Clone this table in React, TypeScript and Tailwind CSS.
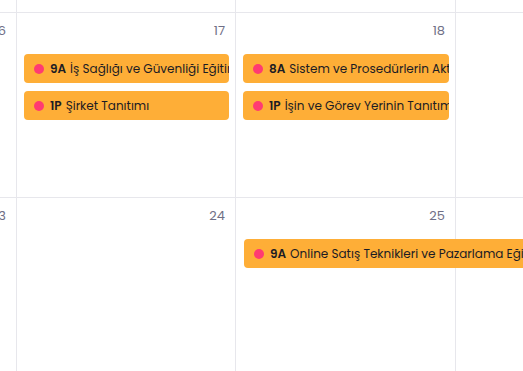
const events1 = [
  { col: 'col-start-2', code: '9A', title: 'İş Sağlığı ve Güvenliği Eğitimi', row: 'row-start-2' },
  { col: 'col-start-2', code: '1P', title: 'Şirket Tanıtımı', row: 'row-start-3' },
  { col: 'col-start-3', code: '8A', title: 'Sistem ve Prosedürlerin Aktarılması', row: 'row-start-2' },
  { col: 'col-start-3', code: '1P', title: 'İşin ve Görev Yerinin Tanıtımı', row: 'row-start-3' },
];

function EventChip({ code, title, className }: { code: string; title: string; className: string }) {
  return (
    <div className={`flex h-[29px] items-center overflow-hidden whitespace-nowrap rounded-[4px] bg-[#feae37] pl-[10px] text-[12px] text-[#1c1c24] ${className}`}>
      <span className="mr-[6px] h-[10px] w-[10px] shrink-0 rounded-full bg-[#ff3b72]" />
      <span className="font-semibold">{code}</span>
      <span className="ml-[4px]">{title}</span>
    </div>
  );
}

function DayCells({ days }: { days: string[] }) {
  return (
    <>
      {days.map((d, i) => (
        <div
          key={i}
          className={`row-span-full row-start-1 min-w-0 border-[#e7e7ec] ${i < 3 ? 'border-r' : ''} ${i === 0 ? 'col-start-1' : i === 1 ? 'col-start-2' : i === 2 ? 'col-start-3' : 'col-start-4'}`}
        >
          <div className="flex justify-end pt-[8px] pr-[10px] text-[13px] leading-5 text-[#6f6f86]">
            <span className="shrink-0">{d}</span>
          </div>
        </div>
      ))}
    </>
  );
}

export default function App() {
  return (
    <div className="h-[371px] w-[523px] overflow-hidden bg-white" style={{ fontFamily: 'Poppins, "Open Sans", sans-serif' }}>
      {/* previous week tail */}
      <div className="grid h-[13px] grid-cols-[17px_219px_220px_1fr] border-b border-[#e7e7ec]">
        <div className="border-r border-[#e7e7ec]" />
        <div className="border-r border-[#e7e7ec]" />
        <div className="border-r border-[#e7e7ec]" />
        <div />
      </div>

      <div className="grid h-[185px] grid-cols-[17px_219px_220px_1fr] grid-rows-[41px_37px_29px_1fr] border-b border-[#e7e7ec]">
        <DayCells days={['16', '17', '18', '']} />
        {events1.map((e, i) => (
          <EventChip key={i} code={e.code} title={e.title} className={`${e.col} ${e.row} mx-[7px] ${e.row === 'row-start-3' ? 'h-[28px]' : ''}`} />
        ))}
      </div>

      <div className="grid h-[173px] grid-cols-[17px_219px_220px_1fr] grid-rows-[41px_29px_1fr]">
        <DayCells days={['23', '24', '25', '']} />
        <EventChip code="9A" title="Online Satış Teknikleri ve Pazarlama Eğitimi" className="col-span-2 col-start-3 row-start-2 ml-[8px] rounded-r-none" />
      </div>
    </div>
  );
}
